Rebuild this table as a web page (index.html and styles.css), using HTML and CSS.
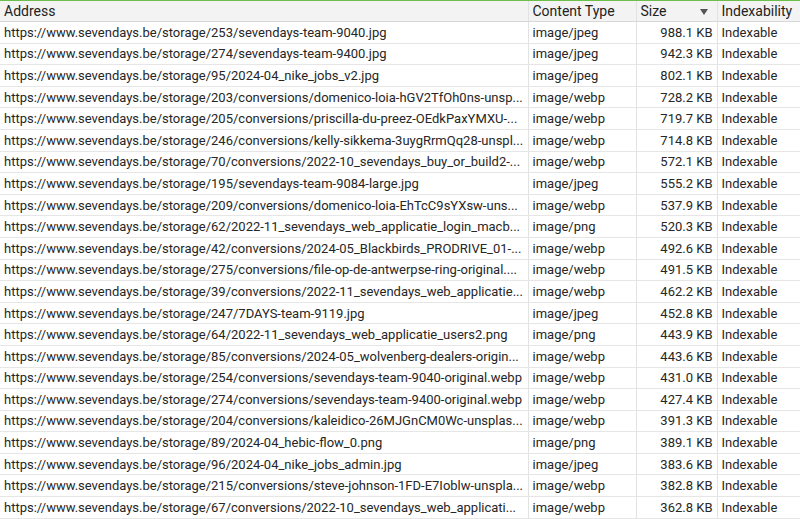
FILE: index.html
```html
<!DOCTYPE html>
<html lang="en">
<head>
  <meta charset="UTF-8">
  <title>Images</title>
  <link rel="stylesheet" href="styles.css">
</head>
<body>

<div class="topline"></div>
<table class="grid">
  <colgroup>
    <col class="c-addr">
    <col class="c-type">
    <col class="c-size">
    <col class="c-idx">
  </colgroup>
  <thead>
    <tr>
      <th>Address</th>
      <th>Content Type</th>
      <th class="sorted">Size <svg class="arrow" width="8" height="6" viewBox="0 0 8 6"><path d="M0 0H8L4 6Z" fill="#555"/></svg></th>
      <th>Indexability</th>
    </tr>
  </thead>
  <tbody id="rows"></tbody>
</table>

<script>
  const rows = [
    ["https://www.sevendays.be/storage/253/sevendays-team-9040.jpg", "image/jpeg", "988.1 KB"],
    ["https://www.sevendays.be/storage/274/sevendays-team-9400.jpg", "image/jpeg", "942.3 KB"],
    ["https://www.sevendays.be/storage/95/2024-04_nike_jobs_v2.jpg", "image/jpeg", "802.1 KB"],
    ["https://www.sevendays.be/storage/203/conversions/domenico-loia-hGV2TfOh0ns-unsp...", "image/webp", "728.2 KB"],
    ["https://www.sevendays.be/storage/205/conversions/priscilla-du-preez-OEdkPaxYMXU-...", "image/webp", "719.7 KB"],
    ["https://www.sevendays.be/storage/246/conversions/kelly-sikkema-3uygRrmQq28-unspl...", "image/webp", "714.8 KB"],
    ["https://www.sevendays.be/storage/70/conversions/2022-10_sevendays_buy_or_build2-...", "image/webp", "572.1 KB"],
    ["https://www.sevendays.be/storage/195/sevendays-team-9084-large.jpg", "image/jpeg", "555.2 KB"],
    ["https://www.sevendays.be/storage/209/conversions/domenico-loia-EhTcC9sYXsw-uns...", "image/webp", "537.9 KB"],
    ["https://www.sevendays.be/storage/62/2022-11_sevendays_web_applicatie_login_macb...", "image/png", "520.3 KB"],
    ["https://www.sevendays.be/storage/42/conversions/2024-05_Blackbirds_PRODRIVE_01-...", "image/webp", "492.6 KB"],
    ["https://www.sevendays.be/storage/275/conversions/file-op-de-antwerpse-ring-original....", "image/webp", "491.5 KB"],
    ["https://www.sevendays.be/storage/39/conversions/2022-11_sevendays_web_applicatie...", "image/webp", "462.2 KB"],
    ["https://www.sevendays.be/storage/247/7DAYS-team-9119.jpg", "image/jpeg", "452.8 KB"],
    ["https://www.sevendays.be/storage/64/2022-11_sevendays_web_applicatie_users2.png", "image/png", "443.9 KB"],
    ["https://www.sevendays.be/storage/85/conversions/2024-05_wolvenberg-dealers-origin...", "image/webp", "443.6 KB"],
    ["https://www.sevendays.be/storage/254/conversions/sevendays-team-9040-original.webp", "image/webp", "431.0 KB"],
    ["https://www.sevendays.be/storage/274/conversions/sevendays-team-9400-original.webp", "image/webp", "427.4 KB"],
    ["https://www.sevendays.be/storage/204/conversions/kaleidico-26MJGnCM0Wc-unsplas...", "image/webp", "391.3 KB"],
    ["https://www.sevendays.be/storage/89/2024-04_hebic-flow_0.png", "image/png", "389.1 KB"],
    ["https://www.sevendays.be/storage/96/2024-04_nike_jobs_admin.jpg", "image/jpeg", "383.6 KB"],
    ["https://www.sevendays.be/storage/215/conversions/steve-johnson-1FD-E7Ioblw-unspla...", "image/webp", "382.8 KB"],
    ["https://www.sevendays.be/storage/67/conversions/2022-10_sevendays_web_applicati...", "image/webp", "362.8 KB"]
  ];

  document.getElementById("rows").innerHTML = rows.map(r => `
    <tr>
      <td>${r[0]}</td>
      <td>${r[1]}</td>
      <td class="num">${r[2]}</td>
      <td>Indexable</td>
    </tr>
  `).join("");
</script>

</body>
</html>
```

FILE: styles.css
```css
body {
  margin: 0;
  font-family: Roboto, "Liberation Sans", sans-serif;
  font-size: 13px;
  color: #262626;
  background: #fff;
  overflow: hidden;
}
.topline {
  height: 1px;
  background: #6cc04a;
}
.grid {
  width: 800px;
  border-collapse: collapse;
  table-layout: fixed;
}
.c-addr { width: 528px; }
.c-type { width: 108px; }
.c-size { width: 81px; }
.c-idx { width: 83px; }

th, td {
  padding: 0 4px;
  white-space: nowrap;
  overflow: hidden;
  text-align: left;
  border-right: 1px solid #e2e2e2;
}
th:last-child, td:last-child { border-right: none; }

th {
  height: 20px;
  font-weight: normal;
  font-size: 14px;
  color: #222;
  background: #f3f3f3;
  border-bottom: 1px solid #d8d8d8;
}
td {
  height: 20.6px;
  border-bottom: 1px solid #e6e6e6;
}
td.num { text-align: right; }

.sorted { position: relative; }
.arrow {
  position: absolute;
  right: 9px;
  top: 8px;
}
```
